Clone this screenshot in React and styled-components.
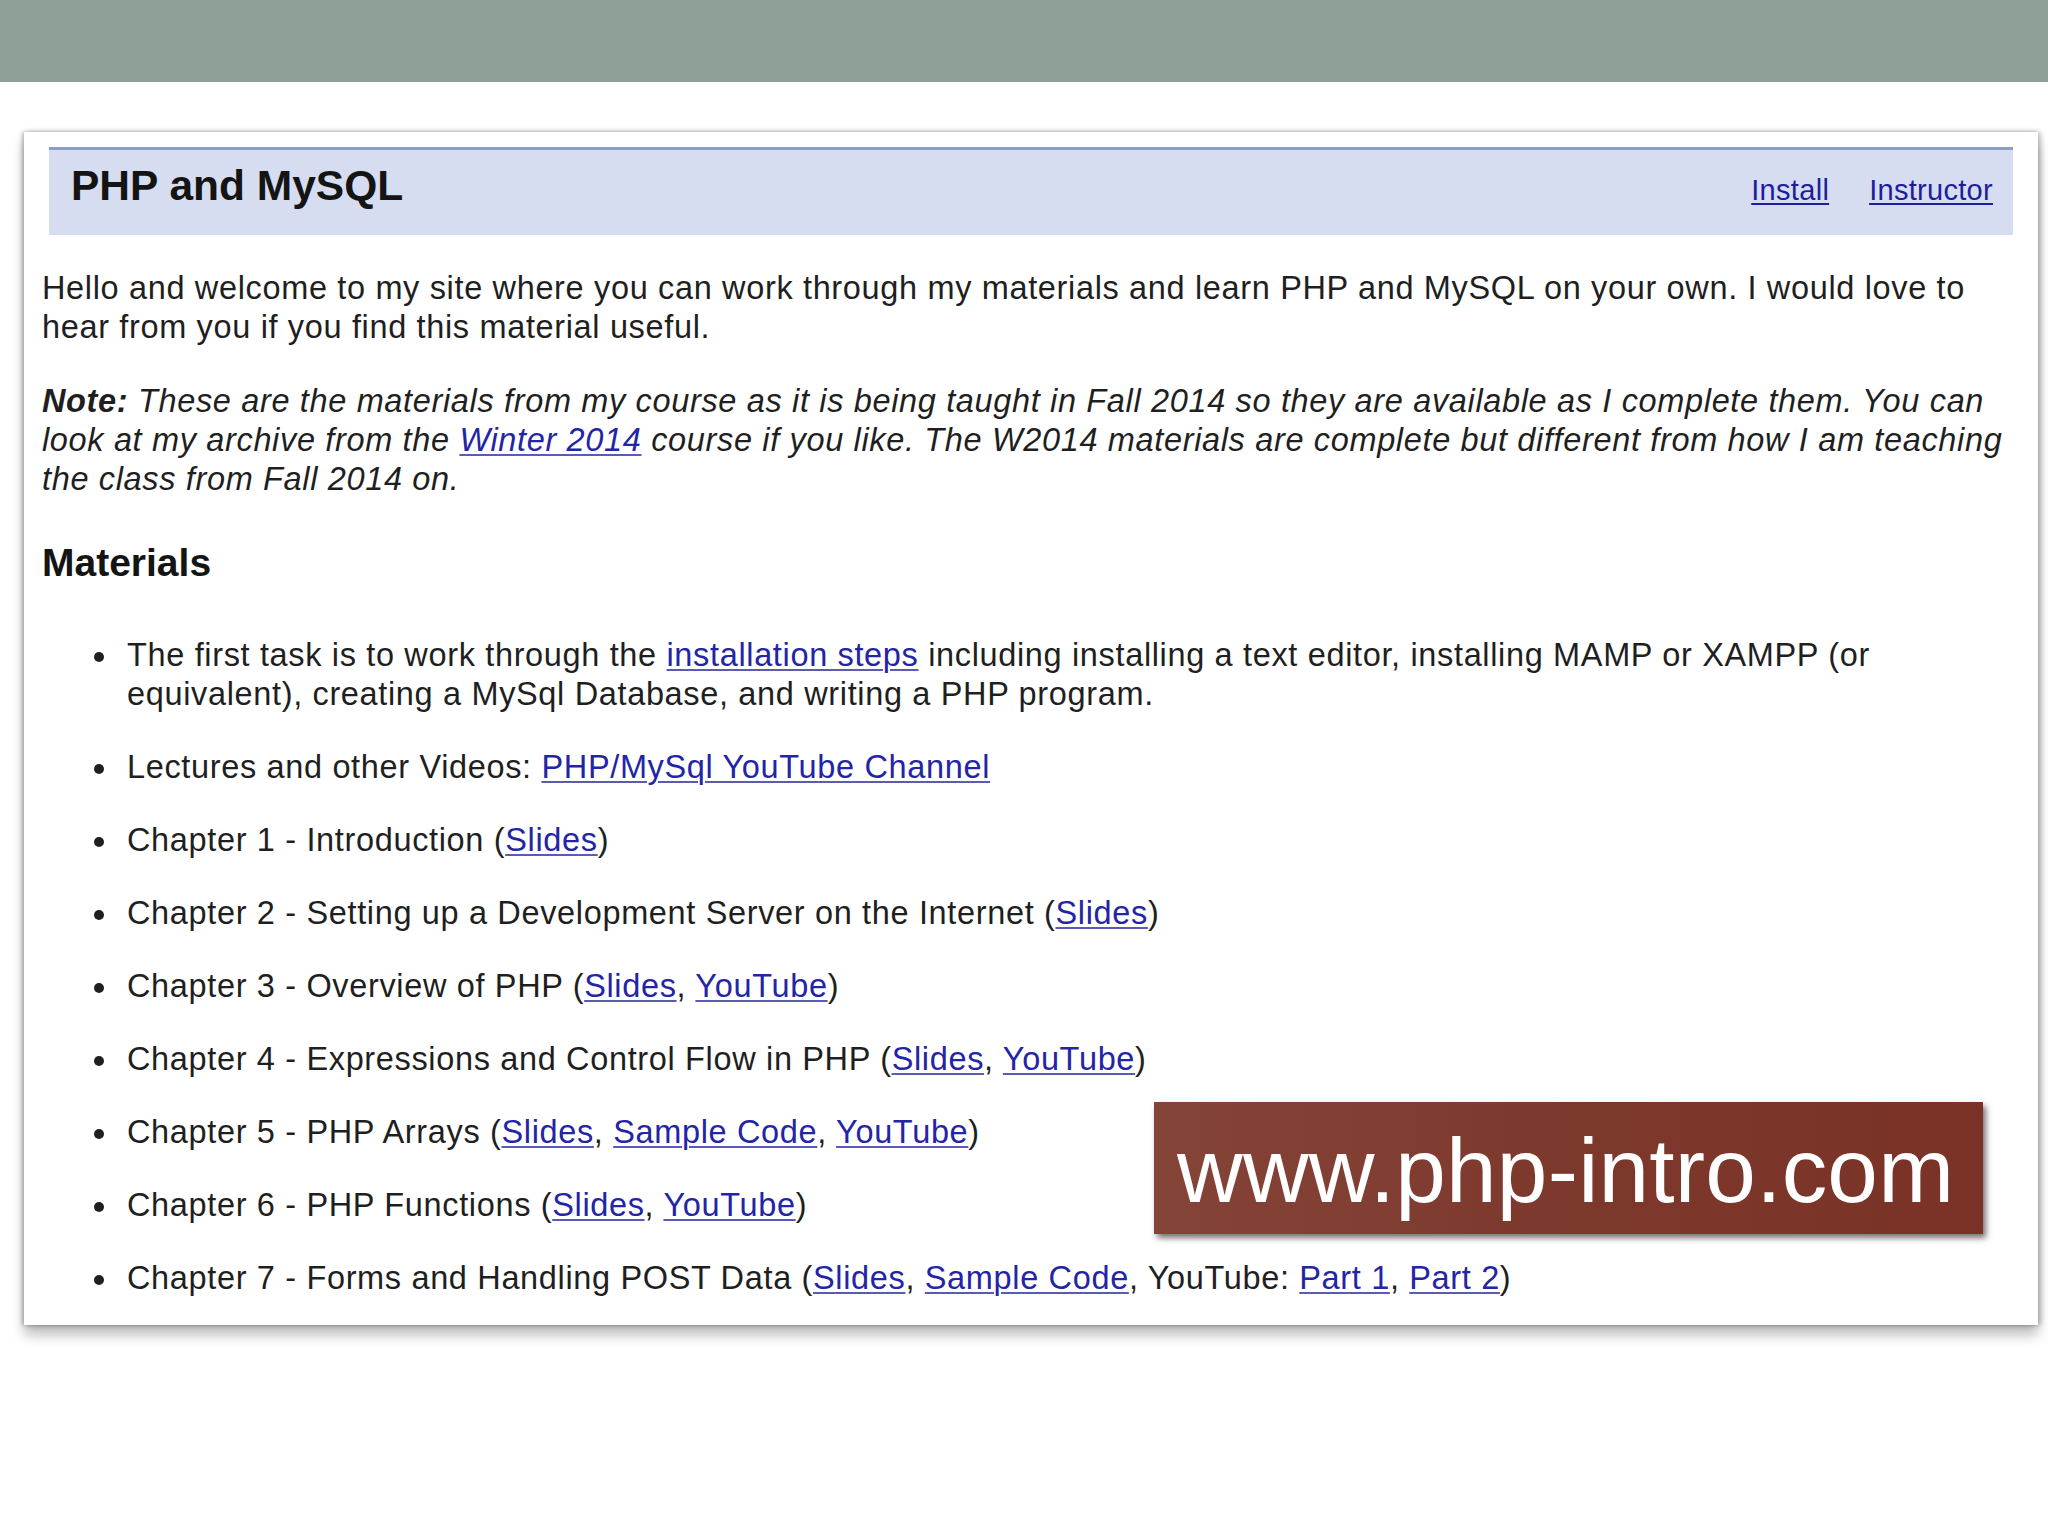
import React from "react";
import styled, { createGlobalStyle } from "styled-components";

const Global = createGlobalStyle`
  html, body { margin: 0; padding: 0; background: #ffffff; }
  body {
    font-family: "Liberation Sans", Arial, Helvetica, sans-serif;
    color: #1f1f1f;
  }
`;

const Page = styled.div`
  width: 2048px;
  min-height: 1536px;
  background: #ffffff;
  overflow: hidden;
`;

const TopBar = styled.div`
  height: 82px;
  background: #8fa098;
`;

const Panel = styled.div`
  position: relative;
  box-sizing: border-box;
  width: 2014px;
  margin: 50px 0 0 24px;
  padding: 15px 8px 27px 18px;
  background: #ffffff;
  box-shadow: 0 10px 12px rgba(0, 0, 0, 0.26), -2px 0 4px rgba(0, 0, 0, 0.25),
    3px 0 5px rgba(0, 0, 0, 0.22);
`;

const Header = styled.div`
  box-sizing: border-box;
  height: 88px;
  margin: 0 17px 0 7px;
  padding: 12px 20px 0 22px;
  display: flex;
  align-items: baseline;
  justify-content: space-between;
  background: #d6ddf0;
  border-top: 3px solid #8e9dc4;
`;

const Title = styled.h1`
  margin: 0;
  font-size: 42.5px;
  font-weight: bold;
  line-height: normal;
  color: #141414;
`;

const Nav = styled.nav`
  display: flex;
  gap: 40px;
`;

const NavLink = styled.a`
  font-size: 29px;
  letter-spacing: 0.3px;
  color: #1e1e9c;
  text-decoration: underline;
  text-decoration-thickness: 2px;
  text-underline-offset: 3px;
`;

const Content = styled.div`
  margin-top: 34px;
  font-size: 32.5px;
  line-height: 39px;
  letter-spacing: 0.65px;
  color: #1f1f1f;
`;

const Para = styled.p`
  margin: 0 0 35px;
  font-style: ${(p) => (p.$italic ? "italic" : "normal")};
`;

const Strong = styled.strong`
  font-weight: bold;
`;

const Link = styled.a`
  color: #2424a6;
  text-decoration: underline;
  text-decoration-thickness: 2px;
  text-underline-offset: 3px;
  text-decoration-color: #5a5ab8;
`;

const SectionTitle = styled.h2`
  margin: 41px 0 0;
  font-size: 39px;
  line-height: 45px;
  font-weight: bold;
  letter-spacing: 0;
  color: #141414;
`;

const List = styled.ul`
  margin: 51px 0 0;
  padding: 0 0 0 85px;
  list-style: none;
`;

const Item = styled.li`
  position: relative;
  & + & {
    margin-top: 34px;
  }
  &::before {
    content: "";
    position: absolute;
    left: -33px;
    top: 16px;
    width: 10px;
    height: 10px;
    border-radius: 50%;
    background: #1f1f1f;
  }
`;

const Watermark = styled.div`
  position: absolute;
  left: 1130px;
  top: 970px;
  box-sizing: border-box;
  width: 829px;
  height: 132px;
  padding: 24px 0 0 23px;
  background: linear-gradient(90deg, #854438 0%, #7d382c 50%, #7a3226 100%);
  box-shadow: 3px 4px 6px rgba(0, 0, 0, 0.55);
  color: #ffffff;
  font-family: "Liberation Sans", Arial, sans-serif;
  font-size: 91px;
  line-height: 90px;
  letter-spacing: 0.2px;
  white-space: nowrap;
`;

const L = (text) => ({ link: text });

const items = [
  [
    "The first task is to work through the ",
    L("installation steps"),
    " including installing a text editor, installing MAMP or XAMPP (or equivalent), creating a MySql Database, and writing a PHP program.",
  ],
  ["Lectures and other Videos: ", L("PHP/MySql YouTube Channel")],
  ["Chapter 1 - Introduction (", L("Slides"), ")"],
  ["Chapter 2 - Setting up a Development Server on the Internet (", L("Slides"), ")"],
  ["Chapter 3 - Overview of PHP (", L("Slides"), ", ", L("YouTube"), ")"],
  ["Chapter 4 - Expressions and Control Flow in PHP (", L("Slides"), ", ", L("YouTube"), ")"],
  ["Chapter 5 - PHP Arrays (", L("Slides"), ", ", L("Sample Code"), ", ", L("YouTube"), ")"],
  ["Chapter 6 - PHP Functions (", L("Slides"), ", ", L("YouTube"), ")"],
  [
    "Chapter 7 - Forms and Handling POST Data (",
    L("Slides"),
    ", ",
    L("Sample Code"),
    ", YouTube: ",
    L("Part 1"),
    ", ",
    L("Part 2"),
    ")",
  ],
];

export default function App() {
  return (
    <Page>
      <Global />
      <TopBar />
      <Panel>
        <Header>
          <Title>PHP and MySQL</Title>
          <Nav>
            <NavLink href="#">Install</NavLink>
            <NavLink href="#">Instructor</NavLink>
          </Nav>
        </Header>
        <Content>
          <Para>
            Hello and welcome to my site where you can work through my materials and learn PHP and
            MySQL on your own. I would love to hear from you if you find this material useful.
          </Para>
          <Para $italic>
            <Strong>Note:</Strong> These are the materials from my course as it is being taught in
            Fall 2014 so they are available as I complete them. You can look at my archive from the{" "}
            <Link href="#">Winter 2014</Link> course if you like. The W2014 materials are complete but
            different from how I am teaching the class from Fall 2014 on.
          </Para>
          <SectionTitle>Materials</SectionTitle>
          <List>
            {items.map((segs, i) => (
              <Item key={i}>
                {segs.map((s, j) =>
                  typeof s === "string" ? (
                    <React.Fragment key={j}>{s}</React.Fragment>
                  ) : (
                    <Link key={j} href="#">
                      {s.link}
                    </Link>
                  )
                )}
              </Item>
            ))}
          </List>
        </Content>
        <Watermark>www.php-intro.com</Watermark>
      </Panel>
    </Page>
  );
}
